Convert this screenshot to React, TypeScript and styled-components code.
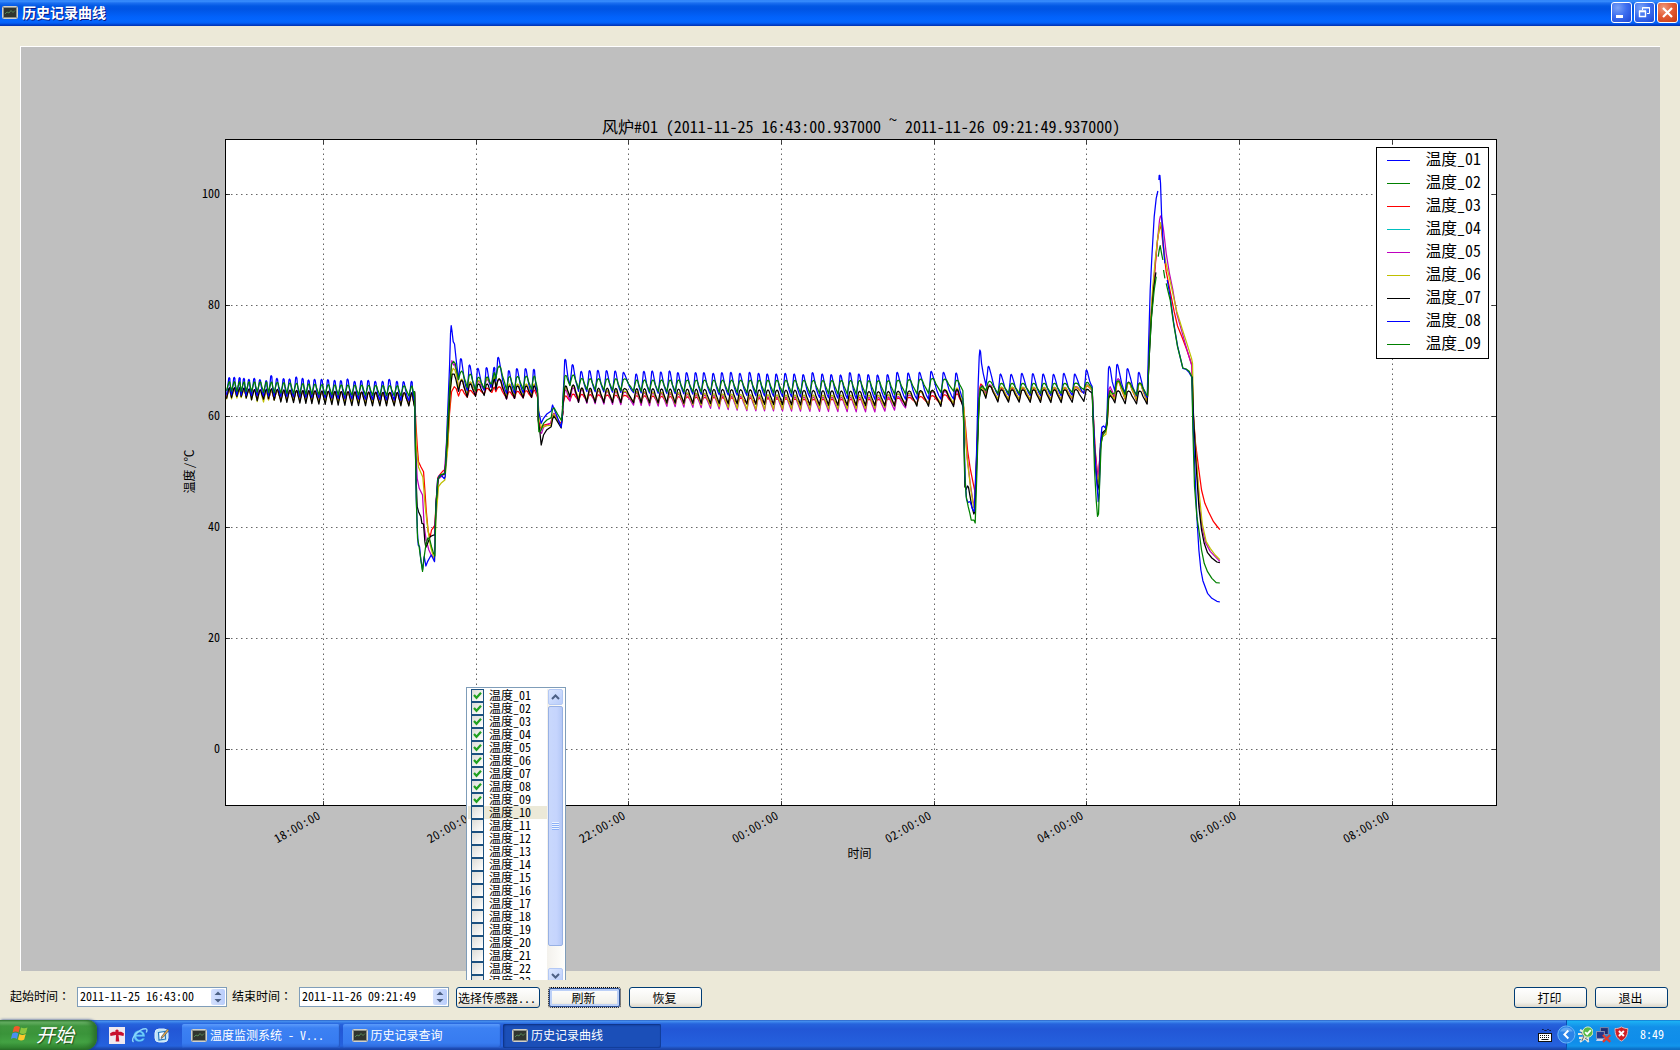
import React from 'react';
import styled, { createGlobalStyle, css } from 'styled-components';

const GlobalStyle = createGlobalStyle`
  * { box-sizing: border-box; }
  body {
    margin: 0;
    overflow: hidden;
    background: #ece9d8;
    font-family: "Noto Sans CJK SC", sans-serif;
    font-feature-settings: "hwid";
    font-size: 12px;
    line-height: 14px;
    color: #000;
  }
`;

/* ---------- window frame ---------- */

const Screen = styled.div`
  position: relative;
  width: 1680px;
  height: 1050px;
  display: flex;
  flex-direction: column;
  background: #ece9d8;
  overflow: hidden;
  white-space: nowrap;
`;

const TitleBar = styled.header`
  flex: none;
  height: 26px;
  display: flex;
  align-items: center;
  padding: 0 2px 2px 2px;
  background: linear-gradient(#2a7cf4 0, #3c92ff 1px, #1b6ff0 3px, #0258e4 6px, #0054e3 9px, #0262fb 17px, #0366ff 21px, #0360f6 23px, #003dc8 25px, #0032ad 26px);
`;

const TitleText = styled.h1`
  flex: 1;
  margin: 0 0 0 4px;
  font-size: 14px;
  line-height: 20px;
  font-weight: 700;
  color: #fff;
  text-shadow: 1px 1px 0 #0a1883;
`;

const CaptionButtons = styled.div`
  display: flex;
  gap: 2px;
  padding-top: 1px;
`;

const CaptionButton = styled.button<{ $close?: boolean }>`
  width: 21px;
  height: 21px;
  padding: 0;
  display: grid;
  place-items: center;
  border: 1px solid #fff;
  border-radius: 3px;
  background: ${p => p.$close
    ? 'radial-gradient(circle at 30% 25%, #f09a7c, #e35b33 45%, #c43a12)'
    : 'radial-gradient(circle at 30% 25%, #7ba3f6, #3d6ff0 45%, #1d46d4)'};
`;

const ChartPanel = styled.main`
  flex: none;
  width: 1640px;
  height: 925px;
  margin: 20px 20px 0;
  border-top: 1px solid #fff;
  border-left: 1px solid #fff;
  background: #bfbfbf;
`;

const ChartSvg = styled.svg`
  display: block;
  font-family: "Noto Sans CJK SC", sans-serif;
  font-size: 12px;
`;

/* ---------- control strip ---------- */

const Controls = styled.section`
  flex: 1;
  display: flex;
  align-items: flex-start;
  padding: 16px 12px 0 10px;
`;

const FieldLabel = styled.label`
  width: 67px;
  line-height: 18px;
  &:nth-of-type(n + 2) { margin-left: 5px; }
`;

const Colon = styled.span`
  font-family: "Noto Sans CJK TC", sans-serif;
  font-feature-settings: normal;
`;

const DateBox = styled.div`
  width: 150px;
  height: 20px;
  display: flex;
  justify-content: space-between;
  padding: 1px 1px 1px 2px;
  border: 1px solid #7f9db9;
  background: #fff;
  line-height: 14px;
`;

const Spinner = styled.div`
  width: 14px;
  height: 16px;
  display: grid;
  place-items: center;
  border-radius: 2px;
  background: linear-gradient(90deg, #d4e0fd, #b9cdfb);
`;

const Push = styled.button<{ $w: number; $ml?: number; $focus?: boolean }>`
  width: ${p => p.$w}px;
  height: 21px;
  margin: 0 0 0 ${p => p.$ml ?? 8}px;
  padding: 0 2px 1px 0;
  overflow: hidden;
  border: 1px solid #003c74;
  border-radius: 3px;
  background: linear-gradient(#fff, #f3f2ec 75%, #dcd6c8);
  font: inherit;
  font-feature-settings: "hwid";
  line-height: 17px;
  color: #000;
  ${p => p.$focus && css`
    border: 1px dotted #000;
    outline: 1px solid #2a4f93;
    outline-offset: -2px;
    box-shadow: inset 0 0 0 3px #bcd0f7;
  `}
`;

const Filler = styled.div`
  flex: 1;
`;

/* ---------- sensor drop-down ---------- */

const Popup = styled.div`
  position: absolute;
  left: 466px;
  top: 687px;
  width: 100px;
  height: 293px;
  display: flex;
  padding: 1px 1px 0 1px;
  border: 1px solid #7f9db9;
  border-bottom: 0;
  background: #fff;
  overflow: hidden;
`;

const Items = styled.ul`
  flex: 1;
  margin: 0;
  padding: 0;
  list-style: none;
`;

const Item = styled.li<{ $hot?: boolean }>`
  height: 13px;
  display: flex;
  padding-left: 3px;
  line-height: 11px;
  background: ${p => (p.$hot ? '#ece9d8' : '#fff')};
`;

const Check = styled.span`
  width: 13px;
  height: 13px;
  margin-right: 5px;
  display: grid;
  place-items: center;
  border: 1px solid #1c5180;
  background: linear-gradient(135deg, #dcdcd7, #fff);
`;

const ScrollBar = styled.div`
  width: 17px;
  height: 303px;
  display: flex;
  flex-direction: column;
  align-items: center;
  background: linear-gradient(90deg, #f3f1ec, #fefefb);
`;

const ScrollButton = styled.div`
  flex: none;
  width: 15px;
  height: 16px;
  display: grid;
  place-items: center;
  border: 1px solid #b3c8f4;
  border-radius: 2px;
  background: linear-gradient(135deg, #dce7ff, #b9cdfb);
`;

const Thumb = styled.div`
  flex: none;
  width: 15px;
  height: 240px;
  margin: 1px 0 22px;
  display: grid;
  place-items: center;
  border: 1px solid #98b1e4;
  border-radius: 2px;
  background: linear-gradient(90deg, #c9d8fc, #c5d4fd 60%, #b4c8f6);
`;

const Grip = styled.div`
  width: 7px;
  height: 8px;
  background: repeating-linear-gradient(#eef4fe 0 1px, #8cb0f8 1px 2px);
`;

/* ---------- taskbar ---------- */

const TaskBar = styled.footer`
  flex: none;
  height: 30px;
  display: flex;
  color: #fff;
  background: linear-gradient(#1f52b8 0, #4a94f0 1px, #3b82ea 2px, #2663dc 4px, #2257d6 9px, #245ddb 20px, #2562dd 26px, #1f4fb9 28px, #1941a5 30px);
`;

const StartButton = styled.button`
  width: 97px;
  display: flex;
  align-items: center;
  gap: 6px;
  padding: 0 0 3px 10px;
  border: 0;
  border-radius: 0 9px 12px 0;
  background: linear-gradient(#2f7a2f 0, #6fb86c 2px, #3f963e 6px, #3a943a 14px, #43a243 22px, #318531 28px, #256b25);
  box-shadow: inset -4px 0 5px #2a6f2a, 1px 0 3px #16368a;
  font: italic 400 19px/26px "Noto Sans CJK SC", sans-serif;
  color: #fff;
  text-shadow: 1px 1px 1px #1d4d1d;
`;

const QuickLaunch = styled.div`
  width: 85px;
  display: flex;
  align-items: center;
  gap: 6px;
  padding: 0 0 0 12px;
`;

const Task = styled.div<{ $active?: boolean }>`
  width: 158px;
  height: 24px;
  margin: 4px 2.500px 0 0;
  padding: 0 0 2px 9px;
  display: flex;
  align-items: center;
  gap: 3px;
  border-radius: 2px;
  background: ${p => (p.$active ? '#1b4fb8' : 'linear-gradient(#5b9bfb, #3c81f3 4px, #377bf0 19px, #2c67d8)')};
  box-shadow: ${p => (p.$active ? 'inset 1px 1px 2px #0c2f7d, inset -1px -1px 1px #153f9b' : 'inset -1px -1px 1px #2558c4')};
`;

const Tray = styled.div`
  width: 114px;
  margin-left: 13px;
  padding-bottom: 2px;
  display: flex;
  align-items: center;
  background: linear-gradient(#0f5fc0 0, #1bb4f5 1px, #19a6f0 3px, #1290e9 7px, #0f8dea 22px, #1295ec 26px, #0c6fc6 29px);
  border-left: 1px solid #0b4fb0;
`;

const TrayIcons = styled.div`
  width: 72px;
  margin-left: -10px;
  display: flex;
  align-items: center;
  gap: 2px;
`;

/* ---------- chart data ---------- */

/* Samples are kept in thirds of a pixel, measured from (170, 340). */
type Pt = [number, number];
type Key = 'red' | 'magenta' | 'yellow' | 'black' | 'blue' | 'green';
const KEYS: Key[] = ['red', 'magenta', 'yellow', 'black', 'blue', 'green'];
const COLORS: Record<Key, string> = {
  red: '#ff0000', magenta: '#bf00bf', yellow: '#bfbf00', black: '#000000', blue: '#0000ff', green: '#008000',
};

const lerp = (a: number, b: number, t: number) => a + (b - a) * t;
const shift = (pts: Pt[], dx: number, dy = 0): Pt[] => pts.map(([x, y]) => [x + dx, y + dy]);

/* Level tables: [x, crest, trough], interpolated along x. */
type Level = [number, number, number];
function levelAt(table: Level[], x: number): [number, number] {
  if (x <= table[0][0]) return [table[0][1], table[0][2]];
  for (let i = 1; i < table.length; i++) {
    if (x <= table[i][0]) {
      const t = (x - table[i - 1][0]) / (table[i][0] - table[i - 1][0]);
      return [lerp(table[i - 1][1], table[i][1], t), lerp(table[i - 1][2], table[i][2], t)];
    }
  }
  const l = table[table.length - 1];
  return [l[1], l[2]];
}

function wave(key: Key, crests: number[], end: number, rise: number, table: Level[], tops?: number[]): Pt[] {
  const out: Pt[] = [];
  crests.forEach((c, i) => {
    const start = c - rise;
    const next = i + 1 < crests.length ? crests[i + 1] - rise : end;
    const [lvl, low] = levelAt(table, c);
    const low2 = levelAt(table, next)[1];
    const top = tops ? tops[i] : lvl;
    const w = next - c;
    const d = low2 - top;
    out.push([start, low]);
    if (key === 'blue') {
      out.push([c - rise * 0.45, lerp(top, low, 0.4)], [c - 1.5, top + 2], [c, top], [c + 2, top + 3],
        [c + w * 0.32, top + d * 0.34], [c + w * 0.55, top + d * 0.66], [c + w * 0.8, top + d * 0.88]);
    } else {
      out.push([c - rise * 0.5, lerp(top, low, 0.45)], [c - 1, top + Math.abs(d) * 0.08], [c + w * 0.12, top],
        [c + w * 0.3, top + d * 0.08], [c + w * 0.5, top + d * 0.4], [c + w * 0.75, top + d * 0.68]);
    }
  });
  out.push([end, levelAt(table, end)[1]]);
  return out;
}

const crestsA = [177, 192, 208, 221, 236, 252, 269, 288, 303, 320, 340, 358, 378, 397, 415, 433, 454, 473, 493, 512, 532, 553, 573, 594, 615, 637, 657, 680, 700, 724];
const blueA = [113, 112, 113, 115, 118, 115, 119, 122, 107, 115, 116, 117, 111, 115, 120, 118, 118, 119, 121, 122, 117, 124, 122, 121, 124, 124, 118, 124, 125, 124];
const levelsA: Record<Key, Level[]> = {
  red: [[170, 146, 172], [230, 148, 168], [300, 152, 178], [730, 160, 192]],
  magenta: [[170, 145, 172], [230, 148, 168], [300, 150, 178], [730, 160, 192]],
  yellow: [[170, 146, 179], [230, 148, 172], [282, 152, 189], [300, 150, 180], [730, 161, 195]],
  black: [[170, 143, 177], [215, 143, 168], [263, 151, 183], [300, 146, 175], [340, 150, 186], [547, 156, 197], [730, 158, 198]],
  blue: [[170, 113, 164], [730, 124, 182]],
  green: [[170, 125, 152], [300, 126, 158], [460, 134, 164], [730, 138, 168]],
};

const crestsB = [872, 898, 923, 949, 972, 984, 1016, 1040, 1066, 1091];
const blueB = [56, 75, 85, 83, 82, 52, 92, 86, 86, 88];
const levelsB: Record<Key, Level[]> = {
  red: [[866, 148, 167], [891, 152, 173], [984, 140, 155], [1007, 156, 176], [1102, 150, 172]],
  magenta: [[866, 118, 148], [891, 132, 170], [977, 112, 140], [1007, 138, 178], [1102, 138, 170]],
  yellow: [[866, 114, 142], [891, 127, 165], [977, 110, 135], [1007, 132, 170], [1102, 132, 165]],
  black: [[866, 117, 148], [891, 132, 172], [965, 132, 165], [977, 107, 136], [1000, 138, 178], [1091, 138, 172], [1102, 138, 160]],
  blue: [[866, 60, 108], [891, 80, 152], [965, 82, 150], [977, 55, 112], [1007, 90, 160], [1102, 88, 158]],
  green: [[866, 91, 112], [891, 100, 140], [923, 112, 152], [965, 110, 140], [984, 78, 115], [1010, 110, 150], [1102, 108, 148]],
};

const crestsC = [75, 97, 123, 148, 173, 199, 225, 250, 288, 311, 336, 362, 388, 413, 439, 466, 491, 519, 545, 572, 599, 628, 655, 681, 708, 735, 762, 789, 817, 846, 873, 901, 929, 956, 984, 1012, 1042, 1071, 1104, 1138, 1173, 1210, 1248].map(x => x + 1110);
const blueC = [58, 74, 94, 92, 91, 92, 93, 97, 102, 94, 93, 96, 93, 98, 98, 98, 98, 100, 98, 97, 100, 97, 100, 102, 102, 100, 102, 104, 98, 102, 104, 105, 98, 102, 104, 105, 104, 97, 99, 97, 94, 97, 99];
const levelsC: Record<Key, Level[]> = {
  red: [[1185, 168, 200], [1200, 162, 182], [1300, 165, 182], [1600, 172, 188], [1900, 178, 190], [2130, 178, 192], [2240, 170, 190], [2378, 160, 195]],
  magenta: [[1185, 150, 200], [1200, 142, 182], [1250, 152, 190], [1600, 165, 203], [1730, 170, 212], [2130, 172, 216], [2205, 168, 208], [2240, 156, 192], [2378, 153, 196]],
  yellow: [[1185, 142, 200], [1200, 134, 168], [1250, 150, 182], [1600, 160, 195], [1730, 164, 208], [2130, 166, 206], [2205, 160, 196], [2378, 142, 190]],
  black: [[1185, 138, 210], [1200, 132, 166], [1230, 144, 187], [1600, 148, 190], [1900, 151, 195], [2130, 155, 197], [2378, 148, 200]],
  blue: [[1185, 60, 200], [1200, 74, 130], [1230, 90, 154], [1600, 98, 163], [1900, 101, 171], [2130, 105, 178], [2378, 99, 177]],
  green: [[1185, 106, 190], [1200, 102, 134], [1235, 116, 148], [1355, 116, 152], [1400, 120, 154], [1900, 121, 160], [2150, 122, 164], [2290, 115, 160], [2378, 122, 152]],
};

const crestsD = [325, 361, 393, 425, 458, 489, 520, 551, 584, 619].map(x => x + 2130);
const blueD = [79, 102, 103, 100, 101, 102, 103, 100, 102, 90];
const levelsD: Record<Key, Level[]> = {
  red: [[2448, 136, 160], [2484, 145, 182], [2700, 145, 182], [2766, 135, 150]],
  magenta: [[2448, 132, 160], [2484, 142, 180], [2700, 142, 180], [2766, 132, 150]],
  yellow: [[2448, 136, 166], [2484, 141, 178], [2700, 143, 180], [2766, 134, 150]],
  black: [[2448, 135, 172], [2484, 149, 186], [2700, 149, 188], [2750, 148, 184], [2766, 148, 160]],
  blue: [[2448, 79, 130], [2480, 100, 165], [2700, 102, 167], [2750, 95, 160], [2766, 90, 140]],
  green: [[2448, 122, 150], [2480, 130, 160], [2700, 130, 160], [2766, 126, 145]],
};

const crestsE = [711, 742, 776].map(x => x + 2130);
const blueE = [73, 86, 97];
const levelsE: Record<Key, Level[]> = {
  red: [[2835, 125, 180], [2872, 128, 178], [2931, 132, 184]],
  magenta: [[2835, 114, 170], [2872, 126, 174], [2931, 131, 180]],
  yellow: [[2835, 124, 176], [2872, 130, 176], [2931, 133, 182]],
  black: [[2835, 152, 188], [2872, 153, 191], [2931, 153, 192]],
  blue: [[2835, 73, 152], [2931, 97, 172]],
  green: [[2835, 121, 158], [2872, 127, 164], [2931, 130, 166]],
};

const dip1: Record<Key, Pt[]> = {
  red: [[733, 155], [737, 250], [742, 330], [745, 365], [752, 380], [760, 395], [764, 450], [768, 510], [774, 575], [780, 590], [784, 570], [790, 562], [794, 555], [798, 480], [803, 412], [812, 400], [820, 391], [825, 390], [833, 310], [838, 220], [844, 155], [852, 140], [858, 146]],
  magenta: [[733, 155], [737, 330], [741, 415], [747, 445], [757, 465], [762, 560], [768, 600], [776, 630], [783, 645], [792, 655], [797, 500], [804, 418], [822, 402], [833, 260], [840, 120], [845, 62], [850, 75], [853, 72], [860, 100]],
  yellow: [[733, 155], [738, 320], [745, 382], [758, 412], [765, 500], [772, 560], [780, 615], [790, 652], [793, 662], [797, 540], [805, 440], [814, 428], [824, 420], [833, 320], [839, 180], [845, 95], [849, 85], [854, 90], [860, 110]],
  black: [[733, 158], [737, 400], [741, 500], [745, 515], [752, 530], [755, 550], [760, 552], [764, 605], [767, 622], [773, 608], [780, 590], [790, 585], [794, 585], [797, 500], [804, 415], [812, 405], [824, 402], [832, 290], [840, 150], [846, 102], [852, 102], [857, 118]],
  blue: [[733, 155], [738, 470], [742, 580], [744, 615], [748, 620], [752, 660], [757, 690], [762, 650], [767, 678], [772, 665], [783, 645], [788, 655], [793, 665], [797, 500], [802, 420], [808, 406], [815, 408], [822, 416], [825, 410], [831, 250], [838, 80], [841, -20], [843, -43], [845, -30], [849, 5], [853, 12], [858, 60]],
  green: [[733, 155], [738, 470], [742, 595], [746, 615], [752, 660], [757, 694], [762, 650], [767, 615], [773, 594], [778, 596], [784, 620], [790, 640], [794, 648], [797, 500], [803, 418], [812, 404], [825, 400], [832, 260], [839, 130], [844, 72], [850, 64], [855, 70], [860, 95]],
};

const dip2: Record<Key, Pt[]> = {
  red: [[1105, 240], [1110, 262], [1113, 266], [1118, 256], [1130, 253], [1142, 250], [1147, 228], [1151, 220], [1160, 235], [1173, 252], [1178, 220]],
  magenta: [[1105, 250], [1110, 274], [1114, 280], [1120, 262], [1130, 256], [1142, 248], [1147, 228], [1151, 221], [1160, 236], [1173, 258], [1178, 215]],
  yellow: [[1105, 200], [1109, 240], [1114, 265], [1120, 260], [1130, 257], [1142, 256], [1147, 232], [1151, 223], [1160, 237], [1173, 256], [1178, 210]],
  black: [[1104, 240], [1109, 275], [1113, 315], [1120, 285], [1130, 269], [1143, 260], [1147, 238], [1151, 228], [1160, 242], [1173, 264], [1178, 215]],
  blue: [[1104, 210], [1109, 230], [1113, 250], [1120, 235], [1130, 222], [1143, 213], [1147, 195], [1155, 215], [1173, 262], [1178, 200]],
  green: [[1104, 240], [1106, 275], [1112, 272], [1120, 250], [1130, 240], [1143, 233], [1147, 207], [1152, 204], [1162, 222], [1174, 242], [1178, 190]],
};

const dip3: Record<Key, Pt[]> = {
  red: shift([[250, 200], [256, 260], [262, 330], [270, 385], [278, 425], [283, 450], [285, 465], [291, 300], [297, 150], [302, 132], [308, 138], [316, 158]], 2130),
  magenta: shift([[250, 200], [256, 290], [262, 360], [270, 430], [278, 480], [283, 505], [291, 320], [297, 165], [302, 136], [308, 140], [316, 160]], 2130),
  yellow: shift([[250, 190], [256, 280], [260, 350], [266, 400], [272, 450], [280, 500], [283, 505], [291, 320], [297, 170], [302, 142], [308, 146], [316, 166]], 2130),
  black: shift([[250, 230], [254, 440], [258, 448], [262, 438], [265, 442], [268, 460], [275, 500], [281, 522], [284, 515], [291, 330], [297, 175], [302, 148], [308, 152], [316, 172]], 2130),
  blue: shift([[250, 230], [255, 420], [259, 478], [263, 487], [270, 485], [277, 508], [282, 514], [289, 340], [294, 130], [297, 50], [299, 30], [301, 35], [304, 70], [309, 100], [316, 130]], 2130),
  green: shift([[249, 200], [254, 410], [258, 470], [264, 500], [269, 520], [273, 540], [281, 540], [285, 549], [290, 400], [296, 200], [300, 145], [306, 138], [316, 150]], 2130),
};

const dip4: Record<Key, Pt[]> = {
  red: shift([[638, 200], [645, 330], [652, 405], [656, 390], [662, 310], [668, 280], [677, 272], [682, 230], [686, 158], [690, 150], [697, 160]], 2130),
  magenta: shift([[638, 200], [645, 340], [653, 412], [656, 390], [662, 310], [668, 282], [677, 274], [682, 220], [686, 148], [690, 140], [697, 155]], 2130),
  yellow: shift([[638, 200], [645, 360], [653, 440], [657, 400], [662, 310], [667, 290], [677, 283], [682, 240], [686, 170], [690, 160], [697, 170]], 2130),
  black: shift([[638, 220], [646, 380], [653, 450], [657, 430], [661, 310], [666, 278], [676, 270], [681, 250], [685, 175], [690, 166], [697, 175]], 2130),
  blue: shift([[638, 200], [645, 370], [651, 440], [654, 485], [657, 460], [661, 310], [665, 262], [670, 258], [676, 264], [680, 240], [683, 140], [685, 85], [687, 79], [690, 85], [696, 125]], 2130),
  green: shift([[638, 220], [643, 390], [648, 480], [652, 529], [655, 522], [659, 410], [663, 310], [668, 285], [675, 275], [679, 262], [684, 175], [690, 152], [697, 162]], 2130),
};

const finale: Record<Key, Pt[][]> = {
  red: [[[82, 800], [88, 620], [96, 510], [105, 410], [112, 330], [117, 300], [122, 285], [128, 340], [138, 425], [150, 485], [162, 545], [172, 588], [185, 620], [200, 660], [215, 705], [219, 850], [226, 940], [236, 1020], [244, 1080], [254, 1120], [265, 1145], [280, 1175], [290, 1188], [299, 1199]]],
  magenta: [[[82, 800], [89, 620], [98, 490], [106, 390], [113, 320], [118, 270], [121, 258], [124, 262], [130, 300], [138, 370], [148, 432], [158, 480], [170, 552], [185, 605], [200, 658], [215, 708], [219, 850], [228, 985], [236, 1110], [246, 1195], [256, 1238], [270, 1264], [285, 1280], [299, 1294]]],
  yellow: [[[82, 800], [89, 610], [97, 480], [105, 390], [112, 330], [118, 290], [121, 278], [127, 320], [135, 390], [148, 445], [160, 500], [170, 545], [185, 594], [200, 640], [214, 685], [217, 700], [220, 860], [228, 985], [236, 1080], [246, 1180], [258, 1235], [270, 1255], [285, 1275], [299, 1289]]],
  black: [[[81, 822], [86, 700], [93, 570], [100, 480], [107, 427]], [[216, 740], [220, 860], [228, 1010], [236, 1130], [244, 1200], [252, 1240], [262, 1268], [275, 1284], [290, 1296], [299, 1298]]],
  blue: [[[81, 800], [85, 650], [90, 480], [95, 380], [102, 260], [108, 205], [113, 183]], [[116, 150], [117, 136], [119, 136], [121, 160], [124, 250], [128, 330], [134, 400]], [[141, 450], [150, 500], [160, 575], [172, 648], [188, 715], [198, 718], [207, 728], [215, 742], [218, 860], [224, 1020], [230, 1160], [236, 1260], [242, 1320], [248, 1352], [262, 1390], [275, 1405], [290, 1414], [299, 1416]]],
  green: [[[82, 797], [87, 680], [94, 560], [102, 480], [108, 440]], [[114, 380], [117, 360], [120, 347], [124, 370], [128, 390]], [[130, 420], [134, 445]], [[138, 460], [145, 490], [150, 510], [160, 580], [172, 650], [188, 714], [198, 717], [207, 724], [215, 740], [218, 900], [223, 1070], [230, 1160], [236, 1200], [244, 1260], [252, 1300], [262, 1325], [275, 1345], [288, 1358], [299, 1359]]],
};

function tracePaths(key: Key): string[] {
  const [first, ...rest] = finale[key].map(seg => shift(seg, 2850, -630));
  const main: Pt[] = [
    ...wave(key, crestsA, 732, 8, levelsA[key], key === 'blue' ? blueA : undefined),
    ...dip1[key],
    ...wave(key, crestsB, 1102, 7, levelsB[key], key === 'blue' ? blueB : undefined),
    ...dip2[key],
    ...wave(key, crestsC, 2378, 8, levelsC[key], key === 'blue' ? blueC : undefined),
    ...dip3[key],
    ...wave(key, crestsD, 2766, 8, levelsD[key], key === 'blue' ? blueD : undefined),
    ...dip4[key],
    ...wave(key, crestsE, 2930, 7, levelsE[key], key === 'blue' ? blueE : undefined),
    ...first,
  ];
  return [main, ...rest].map(seg =>
    'M' + seg.map(([x, y]) => `${(170.2 + x / 3).toFixed(2)} ${(340 + y / 3).toFixed(2)}`).join('L'));
}

const X_TICKS: [number, string][] = [
  [323.5, '18:00:00'], [476.5, '20:00:00'], [628.5, '22:00:00'], [781.5, '00:00:00'],
  [934.5, '02:00:00'], [1086.5, '04:00:00'], [1239.5, '06:00:00'], [1392.5, '08:00:00'],
];
const Y_TICKS: [number, string][] = [
  [194.5, '100'], [305.5, '80'], [416.5, '60'], [527.5, '40'], [638.5, '20'], [749.5, '0'],
];
const LEGEND = ['#0000ff', '#008000', '#ff0000', '#00bfbf', '#bf00bf', '#bfbf00', '#000000', '#0000ff', '#008000'];

const Chart = () => (
  <ChartSvg width="1639" height="924" viewBox="21 47 1639 924">
    <rect x="225.5" y="139.5" width="1271" height="666" fill="#fff" />
    <g stroke="#000" strokeWidth="1" strokeDasharray="1.500 3.500" strokeOpacity="0.6">
      {X_TICKS.map(([x]) => <line key={x} x1={x} x2={x} y1="805" y2="140" />)}
      {Y_TICKS.map(([y]) => <line key={y} x1="226" x2="1496" y1={y} y2={y} />)}
    </g>
    <g fill="none" strokeWidth="1.25" strokeLinejoin="round">
      {KEYS.map(k => tracePaths(k).map((d, i) => <path key={k + i} d={d} stroke={COLORS[k]} />))}
    </g>
    <g stroke="#000" strokeOpacity="0.75">
      {X_TICKS.map(([x]) => <path key={x} d={`M${x} 805v-4M${x} 140v4`} />)}
      {Y_TICKS.map(([y]) => <path key={y} d={`M226 ${y}h4M1496 ${y}h-4`} />)}
    </g>
    <rect x="225.5" y="139.5" width="1271" height="666" fill="none" stroke="#000" />
    <text x="602" y="133" fontSize="16" letterSpacing="-0.03">
      风炉#01 (2011-11-25 16:43:00.937000 <tspan dy="-7">~</tspan><tspan dy="7"> 2011-11-26 09:21:49.937000)</tspan>
    </text>
    {Y_TICKS.map(([y, t]) => <text key={t} x="220" y={y + 3.5} textAnchor="end">{t}</text>)}
    {X_TICKS.map(([x, t]) => (
      <text key={t} letterSpacing="0.4" textAnchor="end" transform={`translate(${x - 2} 818) rotate(-30)`}>{t}</text>
    ))}
    <text x="847.5" y="857.5">时间</text>
    <text transform="translate(193.5 493.5) rotate(-90)">温度<tspan dx="1">/</tspan><tspan dx="1">℃</tspan></text>
    <rect x="1376.5" y="147.5" width="112" height="211" fill="#fff" stroke="#000" />
    {LEGEND.map((c, i) => (
      <g key={i}>
        <line x1="1387" x2="1410" y1={160.5 + i * 23} y2={160.5 + i * 23} stroke={c} />
        <text x="1425.5" y={165 + i * 23} fontSize="15.8">{`温度_0${i + 1}`}</text>
      </g>
    ))}
  </ChartSvg>
);

/* ---------- icons ---------- */

const MonitorIcon = () => (
  <svg width="16" height="13" viewBox="0 0 16 13">
    <rect x="0.5" y="0.5" width="15" height="12" rx="1" fill="#30352f" stroke="#d2d0c8" />
    <rect x="1.5" y="1.5" width="13" height="10" fill="none" stroke="#8b8e88" />
    <path d="M3 8l2-2 2 1 2-2.500 2 2 2-2" fill="none" stroke="#5f9a62" strokeWidth="0.800" />
  </svg>
);

const Arrow = ({ down }: { down?: boolean }) => (
  <svg width="9" height="6" viewBox="0 0 9 6">
    <path d={down ? 'M1 1l3.500 3.500L8 1' : 'M1 5l3.500-3.500L8 5'} fill="none" stroke="#4d6185" strokeWidth="2" />
  </svg>
);

const SpinArrows = () => (
  <Spinner>
    <svg width="8" height="14" viewBox="0 0 8 14">
      <path d="M0.500 5L4 1.500l3.500 3.500zM0.500 9L4 12.500l3.500-3.500z" fill="#4d6185" />
    </svg>
  </Spinner>
);

const WindowsFlag = () => (
  <svg width="20" height="19" viewBox="0 0 20 19">
    <path d="M4 3c2-1.500 4-1.300 6 0L8.600 8.500c-2-1.200-4-1.200-6 0z" fill="#f0592a" />
    <path d="M11 3.500c2 1.100 4 1.100 6.500 0L16 9c-2 1.200-4 1.200-6.300 0z" fill="#8cc63f" />
    <path d="M2.300 9.500c2-1.200 4-1.200 6 0L6.900 15c-2-1.200-4-1.200-6 0z" fill="#4a8ff0" />
    <path d="M9.400 10c2 1.200 4 1.200 6.300 0l-1.500 5.500c-2 1.200-4 1.200-6.300 0z" fill="#fcc82c" />
  </svg>
);

const RedFigureIcon = () => (
  <svg width="16" height="17" viewBox="0 0 16 17">
    <rect width="16" height="17" fill="#efe9f0" />
    <path d="M1 6.500C3 4.500 5 4.500 6.500 5a1.700 1.700 0 1 1 3 0C11 4.500 13 4.500 15 6.500L14.500 9 9.500 8l.8 6.500H6.700L7 8 1.500 9z" fill="#c8102e" />
  </svg>
);

const ExplorerIcon = () => (
  <svg width="17" height="17" viewBox="0 0 17 17">
    <path d="M14 9.800H5.500c.3 3.400 4.700 3.600 5.800 1.500h2.500C12 16.800 2.600 15.800 2.600 8.900 2.600 1.500 14.500 1.500 14 9.800zM5.600 7.500h5.500c-.4-2.700-5-2.700-5.500 0z" fill="#6ccbfa" stroke="#1a6ad0" strokeWidth="0.400" />
    <path d="M2.500 15C-1.500 12 8 1.500 15 1.800c1.500.5 1 2.200.2 3.700" fill="none" stroke="#8fd6fb" strokeWidth="1.400" />
  </svg>
);

const DesktopIcon = () => (
  <svg width="17" height="17" viewBox="0 0 17 17">
    <rect x="1" y="2" width="13" height="13" rx="4" fill="#bfe3f7" stroke="#dff1fb" />
    <path d="M4.500 5.500l6.500-1 .5 7.500-6.500 1z" fill="#fff" stroke="#2478bd" strokeWidth="1.200" />
    <path d="M7.500 9.500l6-7.500 1.500 1.300L9 10.500l-2 1z" fill="#e9a33c" stroke="#31587d" strokeWidth="0.700" />
  </svg>
);

const KeyboardIcon = () => (
  <svg width="14" height="14" viewBox="0 0 14 14">
    <path d="M4 1.500h1.500l1 1h2l1-1h1l1 1H13" fill="none" stroke="#0b1c46" />
    <rect x="0.500" y="5.500" width="13" height="8" fill="#fff" stroke="#111" />
    <path d="M2 7.500h10M2 9.500h10" stroke="#111" strokeDasharray="1 1" />
    <path d="M3.500 11.500h7" stroke="#111" />
  </svg>
);

const HideArrowIcon = () => (
  <svg width="19" height="19" viewBox="0 0 19 19">
    <circle cx="9.500" cy="9.500" r="8.700" fill="#2b83e8" stroke="#6db8f7" />
    <path d="M3 6.500a7.200 7.200 0 0 1 13 0z" fill="#79b7f7" opacity="0.700" />
    <path d="M11.500 5.500l-4 4 4 4" fill="none" stroke="#fff" strokeWidth="2" />
  </svg>
);

const SafeIcon = () => (
  <svg width="16" height="17" viewBox="0 0 16 17">
    <path d="M2 4l4 2v7l-4 3M0 8h6M1 12h7M6 11l5 5M10 11v4" stroke="#e8e8e0" strokeWidth="2.200" fill="none" />
    <path d="M3 6l3 4-2 5M7 12l3 2" stroke="#666" fill="none" />
    <circle cx="10" cy="6" r="5.200" fill="#58b947" stroke="#dff0c8" />
    <path d="M7.300 6l2 2.200L13 4" fill="none" stroke="#fff" strokeWidth="1.800" />
  </svg>
);

const NetworkIcon = () => (
  <svg width="17" height="17" viewBox="0 0 17 17">
    <rect x="5.500" y="1.500" width="8" height="7" fill="#1f2d72" stroke="#7d86a8" />
    <rect x="1.500" y="5.500" width="8" height="7" fill="#26368a" stroke="#8a93b8" />
    <path d="M1 15h8l-1-2H2z" fill="#c9d3ee" />
    <path d="M8 9l7.500 7M15.500 9L8 16" stroke="#e23b2e" strokeWidth="2.200" />
  </svg>
);

const ShieldIcon = () => (
  <svg width="15" height="16" viewBox="0 0 15 16">
    <path d="M7.500.8C9.500 2 11.500 2.500 14 2.500c0 6-1.500 10-6.500 12.700C2.500 12.500 1 8.500 1 2.500 3.500 2.500 5.500 2 7.500.8z" fill="#cf1f25" stroke="#e5b5b5" />
    <path d="M5 5l5 5M10 5l-5 5" stroke="#fff" strokeWidth="2" />
  </svg>
);

/* ---------- page ---------- */

const SENSORS = Array.from({ length: 23 }, (_, i) => `温度_${String(i + 1).padStart(2, '0')}`);

const SensorPopup = () => (
  <Popup>
    <Items>
      {SENSORS.map((name, i) => (
        <Item key={name} $hot={i === 9}>
          <Check>
            {i < 9 && (
              <svg width="9" height="9" viewBox="0 0 9 9">
                <path d="M1 4l2.500 2.800L8 1.800" fill="none" stroke="#21a121" strokeWidth="2.200" />
              </svg>
            )}
          </Check>
          {name}
        </Item>
      ))}
    </Items>
    <ScrollBar>
      <ScrollButton><Arrow /></ScrollButton>
      <Thumb><Grip /></Thumb>
      <ScrollButton><Arrow down /></ScrollButton>
    </ScrollBar>
  </Popup>
);

const Clock = styled.time`
  width: 40px;
  margin-left: 11px;
  line-height: 28px;
`;

const KeyboardSlot = styled.div`
  display: flex;
  align-items: center;
  margin-right: 1px;
`;

export default function App() {
  return (
    <Screen>
      <GlobalStyle />
      <TitleBar>
        <MonitorIcon />
        <TitleText>历史记录曲线</TitleText>
        <CaptionButtons>
          <CaptionButton>
            <svg width="15" height="15"><rect x="2" y="10" width="7" height="3" fill="#fff" /></svg>
          </CaptionButton>
          <CaptionButton>
            <svg width="15" height="15" fill="none" stroke="#fff">
              <path d="M5.500 5V2.500h7v6H10M5 3h8" /><path d="M2.500 6.500h6v5h-6zM2 6h7" strokeWidth="1.400" />
            </svg>
          </CaptionButton>
          <CaptionButton $close>
            <svg width="15" height="15"><path d="M3 3l9 9M12 3l-9 9" stroke="#fff" strokeWidth="2.200" /></svg>
          </CaptionButton>
        </CaptionButtons>
      </TitleBar>

      <ChartPanel><Chart /></ChartPanel>

      <Controls>
        <FieldLabel>起始时间<Colon>：</Colon></FieldLabel>
        <DateBox>2011-11-25 16:43:00<SpinArrows /></DateBox>
        <FieldLabel>结束时间<Colon>：</Colon></FieldLabel>
        <DateBox>2011-11-26 09:21:49<SpinArrows /></DateBox>
        <Push $w={84} $ml={7}>选择传感器...</Push>
        <Push $w={73} $focus>刷新</Push>
        <Push $w={73}>恢复</Push>
        <Filler />
        <Push $w={73}>打印</Push>
        <Push $w={73}>退出</Push>
      </Controls>

      <TaskBar>
        <StartButton><WindowsFlag />开始</StartButton>
        <QuickLaunch><RedFigureIcon /><ExplorerIcon /><DesktopIcon /></QuickLaunch>
        <Task><MonitorIcon />温度监测系统 - V...</Task>
        <Task><MonitorIcon />历史记录查询</Task>
        <Task $active><MonitorIcon />历史记录曲线</Task>
        <Filler />
        <KeyboardSlot><KeyboardIcon /></KeyboardSlot>
        <Tray>
          <TrayIcons><HideArrowIcon /><SafeIcon /><NetworkIcon /><ShieldIcon /></TrayIcons>
          <Clock>8:49</Clock>
        </Tray>
      </TaskBar>

      <SensorPopup />
    </Screen>
  );
}
